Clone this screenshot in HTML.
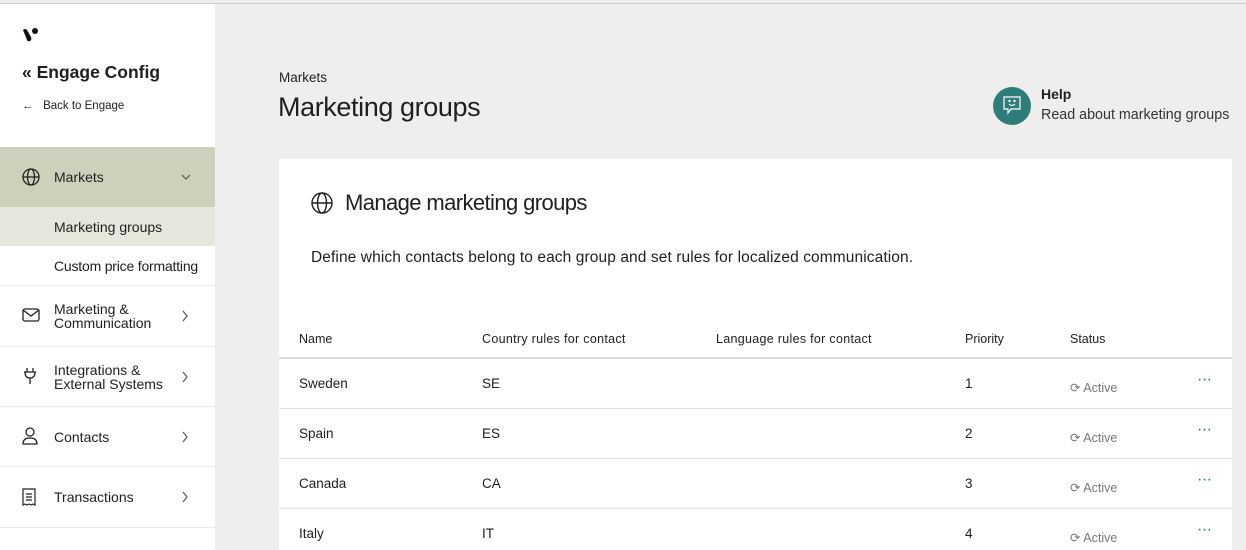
<!DOCTYPE html><html><head><style>
*{margin:0;padding:0;box-sizing:border-box}
html,body{width:1246px;height:550px;overflow:hidden}
body{background:#eeeeec;font-family:"Liberation Sans",sans-serif;color:#1f1f1f;position:relative}
.a{position:absolute}
#sb{left:0;top:4px;width:215px;height:560px;background:#fff}
.row{position:absolute;left:0;width:215px;font-size:14px;border-bottom:1px solid #ebebeb}
.row span{position:absolute;left:54px}
.chev{position:absolute;left:181px}
.t{position:absolute;font-size:13.5px}
.h{position:absolute;font-size:12.5px;top:332px}
.hl{position:absolute;left:279px;width:953px;height:1px;background:#e2e2e2}
.act{position:absolute;left:1070px;color:#777;font-size:12.5px}
.dots{position:absolute;left:1197px;color:#2e6b68;font-size:16px;letter-spacing:-0.5px}
</style></head><body>
<div class="a" style="left:0;top:3px;width:1246px;height:1px;background:#cfcfcf"></div>
<div id="sb" class="a"></div>
<svg class="a" style="left:22px;top:27px" width="18" height="16" viewBox="0 0 18 16"><path d="M1 3 Q3 1 5 3 L9 10 Q10 13 8 14 Q6 15 5 13 Z" fill="#111"/><circle cx="13" cy="4" r="3" fill="#111"/></svg>
<div class="a" style="left:22px;top:62px;font-size:17.5px;font-weight:bold">«&nbsp;Engage Config</div>
<div class="a" style="left:22px;top:100px;font-size:11.5px">←&nbsp;&nbsp;&nbsp;Back to Engage</div>
<div class="row" style="top:147px;height:60px;background:#cfd0bb;border:none"><svg class="a" style="left:22px;top:21px" width="18" height="18" viewBox="0 0 18 18" fill="none" stroke="#222" stroke-width="1.3"><circle cx="9" cy="9" r="8"/><ellipse cx="9" cy="9" rx="3.5" ry="8"/><path d="M1 9h16"/></svg><span style="top:22px">Markets</span><svg class="chev" style="top:26px" width="10" height="8"><path d="M1 2l4 4 4-4" fill="none" stroke="#555" stroke-width="1.2"/></svg></div>
<div class="row" style="top:207px;height:39px;background:#e6e6dc;border:none"><span style="top:12px;font-size:14px">Marketing groups</span></div>
<div class="row" style="top:246px;height:40px"><span style="top:12px;font-size:14px;letter-spacing:-0.2px">Custom price formatting</span></div>
<div class="row" style="top:286px;height:61px"><svg class="a" style="left:22px;top:22px" width="18" height="14" fill="none" stroke="#222" stroke-width="1.3"><rect x="1" y="1" width="16" height="12" rx="2"/><path d="M1 2l8 6 8-6"/></svg><span style="top:16px;line-height:14px;font-size:14px">Marketing &amp;<br>Communication</span><svg class="chev" style="top:24px" width="8" height="12"><path d="M2 1l4 5-4 5" fill="none" stroke="#555" stroke-width="1.2"/></svg></div>
<div class="row" style="top:347px;height:60px"><svg class="a" style="left:23px;top:20px" width="14" height="18" fill="none" stroke="#222" stroke-width="1.3"><path d="M4 1v4M10 1v4M1 5h12M2 5q0 6 5 6q5 0 5-6M7 11v6"/></svg><span style="top:16px;line-height:14px;font-size:14px">Integrations &amp;<br>External Systems</span><svg class="chev" style="top:24px" width="8" height="12"><path d="M2 1l4 5-4 5" fill="none" stroke="#555" stroke-width="1.2"/></svg></div>
<div class="row" style="top:407px;height:60px"><svg class="a" style="left:22px;top:20px" width="16" height="18" fill="none" stroke="#222" stroke-width="1.3"><circle cx="8" cy="5" r="4"/><path d="M1 17q0-6 7-6q7 0 7 6z"/></svg><span style="top:22px;font-size:14px">Contacts</span><svg class="chev" style="top:24px" width="8" height="12"><path d="M2 1l4 5-4 5" fill="none" stroke="#555" stroke-width="1.2"/></svg></div>
<div class="row" style="top:467px;height:61px"><svg class="a" style="left:22px;top:21px" width="14" height="18" fill="none" stroke="#222" stroke-width="1.2"><path d="M1 1h12v16l-2-1-2 1-2-1-2 1-2-1-2 1z M4 6h6M4 9h6M4 12h6"/></svg><span style="top:22px;font-size:14px">Transactions</span><svg class="chev" style="top:24px" width="8" height="12"><path d="M2 1l4 5-4 5" fill="none" stroke="#555" stroke-width="1.2"/></svg></div>

<div class="a" style="left:279px;top:70px;font-size:13.5px">Markets</div>
<div class="a" style="left:278px;top:92px;font-size:27px;letter-spacing:-0.4px">Marketing groups</div>
<div class="a" style="left:993px;top:87px;width:38px;height:38px;border-radius:50%;background:#2e7d78"></div>
<svg class="a" style="left:1003px;top:96px" width="18" height="20" fill="none" stroke="#fff" stroke-width="1.2"><path d="M1 1h16v12H8l-3 4v-4H1z"/><path d="M6 8q3 3 6 0"/><circle cx="6.5" cy="5" r=".6" fill="#fff"/><circle cx="11.5" cy="5" r=".6" fill="#fff"/></svg>
<div class="a" style="left:1041px;top:86px;font-size:14px;font-weight:bold">Help</div>
<div class="a" style="left:1041px;top:107px;font-size:14.3px;color:#333">Read about marketing groups</div>

<div class="a" style="left:279px;top:159px;width:953px;height:400px;background:#fff"></div>
<svg class="a" style="left:311px;top:192px" width="22" height="22" fill="none" stroke="#222" stroke-width="1.4"><circle cx="11" cy="11" r="10"/><ellipse cx="11" cy="11" rx="4.5" ry="10"/><path d="M1 11h20"/></svg>
<div class="a" style="left:345px;top:190px;font-size:22px;letter-spacing:-0.6px">Manage marketing groups</div>
<div class="a" style="left:311px;top:249px;font-size:15.5px;letter-spacing:0.1px">Define which contacts belong to each group and set rules for localized communication.</div>

<div class="h" style="left:299px">Name</div>
<div class="h" style="left:482px;letter-spacing:0.3px">Country rules for contact</div>
<div class="h" style="left:716px;letter-spacing:0.3px">Language rules for contact</div>
<div class="h" style="left:965px">Priority</div>
<div class="h" style="left:1070px">Status</div>
<div class="hl" style="top:357px;height:2px;background:#dcdcdc"></div>

<div class="t" style="left:299px;top:376px">Sweden</div><div class="t" style="left:482px;top:376px">SE</div><div class="t" style="left:965px;top:376px">1</div>
<div class="act" style="top:380px">⟳ Active</div><div class="dots" style="top:371px">···</div>
<div class="hl" style="top:408px"></div>
<div class="t" style="left:299px;top:426px">Spain</div><div class="t" style="left:482px;top:426px">ES</div><div class="t" style="left:965px;top:426px">2</div>
<div class="act" style="top:430px">⟳ Active</div><div class="dots" style="top:421px">···</div>
<div class="hl" style="top:458px"></div>
<div class="t" style="left:299px;top:476px">Canada</div><div class="t" style="left:482px;top:476px">CA</div><div class="t" style="left:965px;top:476px">3</div>
<div class="act" style="top:480px">⟳ Active</div><div class="dots" style="top:471px">···</div>
<div class="hl" style="top:508px"></div>
<div class="t" style="left:299px;top:526px">Italy</div><div class="t" style="left:482px;top:526px">IT</div><div class="t" style="left:965px;top:526px">4</div>
<div class="act" style="top:530px">⟳ Active</div><div class="dots" style="top:521px">···</div>
</body></html>
